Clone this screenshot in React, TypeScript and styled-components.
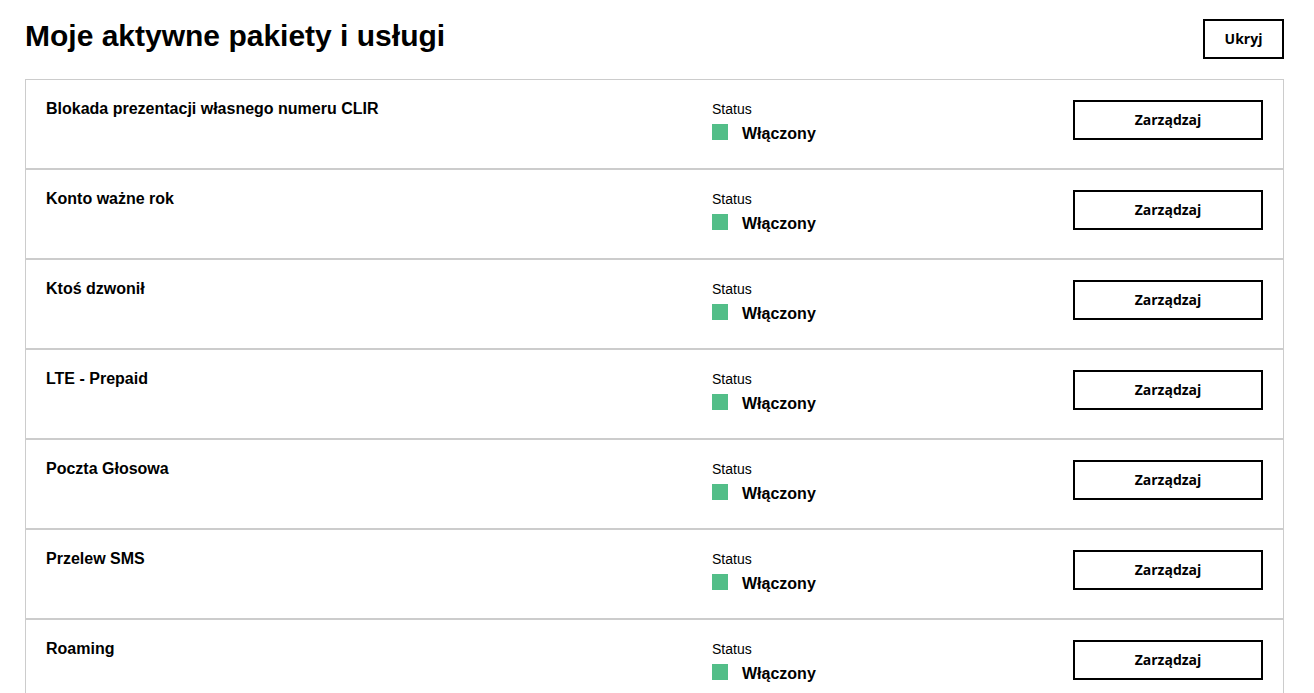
import React from "react";
import styled, { createGlobalStyle } from "styled-components";

const services = [
    "Blokada prezentacji własnego numeru CLIR",
    "Konto ważne rok",
    "Ktoś dzwonił",
    "LTE - Prepaid",
    "Poczta Głosowa",
    "Przelew SMS",
    "Roaming",
];

const GlobalStyle = createGlobalStyle`
  body {
    margin: 0;
    background: #fff;
    color: #000;
    font-family: "Liberation Sans", Arial, sans-serif;
  }
`;

export default function App() {
    return (
        <>
            <GlobalStyle />
            <Page>
                <Header>
                    <Heading>Moje aktywne pakiety i usługi</Heading>
                    <HideButton>Ukryj</HideButton>
                </Header>
                <List>
                    {services.map(name => (
                        <Row key={name}>
                            <Title>{name}</Title>
                            <Status>
                                <StatusLabel>Status</StatusLabel>
                                <StatusValue>
                                    <Dot />
                                    Włączony
                                </StatusValue>
                            </Status>
                            <ManageButton>Zarządzaj</ManageButton>
                        </Row>
                    ))}
                </List>
            </Page>
        </>
    );
}

const Page = styled.div`
  padding: 19px 30px 0 25px;
`;

const Header = styled.div`
  display: flex;
  justify-content: space-between;
  align-items: flex-start;
  margin-bottom: 20px;
`;

const Heading = styled.h1`
  margin: 0;
  font-size: 30px;
  line-height: 34px;
  font-weight: 700;
`;

const OutlineButton = styled.button`
  box-sizing: border-box;
  height: 40px;
  background: #fff;
  border: 2px solid #000;
  color: #000;
  font-family: "Open Sans", "Liberation Sans", sans-serif;
  font-weight: 700;
  font-size: 14px;
  cursor: pointer;
  padding: 0 0 1px;
`;

const HideButton = styled(OutlineButton)`
  width: 81px;
`;

const ManageButton = styled(OutlineButton)`
  width: 190px;
  justify-self: end;
`;

const List = styled.div`
  border: 1px solid #ccc;
  border-bottom: none;
`;

const Row = styled.div`
  display: grid;
  grid-template-columns: 666px 1fr 190px;
  align-items: start;
  height: 90px;
  padding: 20px 20px 0 20px;
  box-sizing: border-box;
  border-bottom: 2px solid #ccc;
`;

const Title = styled.div`
  font-size: 16px;
  font-weight: 700;
  line-height: 18px;
`;

const Status = styled.div`
  display: flex;
  flex-direction: column;
`;

const StatusLabel = styled.div`
  font-size: 14px;
  line-height: 16px;
  margin: 1px 0 8px;
`;

const StatusValue = styled.div`
  display: flex;
  align-items: flex-start;
  font-size: 16px;
  font-weight: 700;
  line-height: 18px;
`;

const Dot = styled.span`
  width: 16px;
  height: 16px;
  margin: -1px 14px 0 0;
  background: #52be88;
`;
